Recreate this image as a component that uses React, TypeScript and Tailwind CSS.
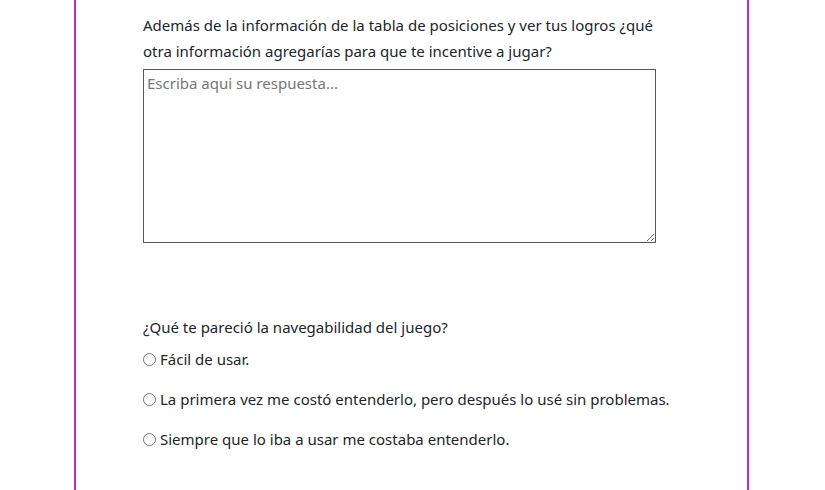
import React from "react";

const options = [
  "Fácil de usar.",
  "La primera vez me costó entenderlo, pero después lo usé sin problemas.",
  "Siempre que lo iba a usar me costaba entenderlo.",
];

const App = () => {
  return (
    <div className="min-h-[490px] bg-white font-['Noto_Sans','Open_Sans',sans-serif] text-[15px] text-[#212529]">
      <div className="ml-[74px] w-[675px] min-h-[490px] border-x-2 border-[#bb2bc4] pl-[67px]">
        {/* Pregunta abierta */}
        <div className="pt-[12px]">
          <p className="leading-[26px]">
            Además de la información de la tabla de posiciones y ver tus logros ¿qué
            <br />
            otra información agregarías para que te incentive a jugar?
          </p>
          <textarea
            placeholder="Escriba aqui su respuesta..."
            className="mt-[5px] block h-[174px] w-[513px] border border-[#555] px-[3px] py-[2px] text-[15px] placeholder:text-[#767676] outline-none"
          />
        </div>

        {/* Navegabilidad */}
        <div className="mt-[71px]">
          <p className="leading-[26px]">¿Qué te pareció la navegabilidad del juego?</p>
          <div className="mt-[6px] flex flex-col gap-[14px]">
            {options.map((opt, i) => (
              <label key={i} className="flex h-[26px] items-center gap-[4px]">
                <span className="block h-[13px] w-[13px] rounded-full border border-[#767676] bg-white" />
                <span>{opt}</span>
              </label>
            ))}
          </div>
        </div>
      </div>
    </div>
  );
};

export default App;
